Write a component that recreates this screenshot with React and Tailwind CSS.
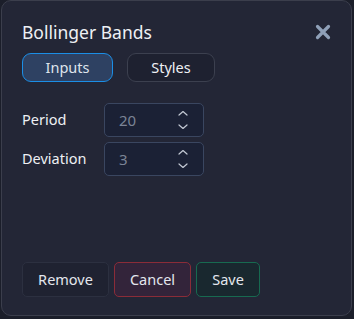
import React from "react";

function Spinner() {
  return (
    <svg width="12" height="22" viewBox="0 0 12 22" fill="none" stroke="#c3c9d4" strokeWidth="1.2" strokeLinecap="round" strokeLinejoin="round">
      <path d="M2 6 L6 2.5 L10 6" />
      <path d="M2 16 L6 19.5 L10 16" />
    </svg>
  );
}

function NumField({ value }) {
  return (
    <div className="w-[100px] h-[34px] rounded-[5px] border border-[#3a4660] bg-[#1b2135] flex items-center justify-between pl-[14px] pr-[14px]">
      <span className="text-[15px] text-[#7b8496]">{value}</span>
      <Spinner />
    </div>
  );
}

export default function App() {
  return (
    <div className="w-[354px] h-[319px] bg-[#1b1e2a] relative" style={{ fontFamily: '"Noto Sans", "Open Sans", sans-serif' }}>
      <div className="absolute left-[1px] top-0 w-[351px] h-[316px] rounded-[10px] border border-[#3b3e4c] bg-[#232636] flex flex-col pl-[20px] pr-[21px] pt-[18px] pb-[18px]">
        <div className="flex items-center justify-between h-[26px]">
          <span className="text-[17.5px] text-[#eef0f4]">Bollinger Bands</span>
          <svg width="16" height="16" viewBox="0 0 16 16" className="mr-[-1px]">
            <path d="M2.5 2.5 L13.5 13.5 M13.5 2.5 L2.5 13.5" stroke="#8fa0b8" strokeWidth="3.2" strokeLinecap="round" />
          </svg>
        </div>
        <div className="flex gap-[14px] mt-[8px]">
          <div className="w-[91px] h-[29px] rounded-[9px] border border-[#1b8ee6] bg-[#2e4162] flex items-center justify-center text-[14.5px] text-[#dfe4ec]">Inputs</div>
          <div className="w-[88px] h-[29px] rounded-[9px] border border-[#3c404f] bg-[#1e2130] flex items-center justify-center text-[14.5px] text-[#eef0f4]">Styles</div>
        </div>
        <div className="mt-[21px] flex flex-col gap-[5px]">
          <div className="flex items-center">
            <span className="w-[82px] text-[14.5px] text-[#eef0f4]">Period</span>
            <NumField value="20" />
          </div>
          <div className="flex items-center">
            <span className="w-[82px] text-[14.5px] text-[#eef0f4]">Deviation</span>
            <NumField value="3" />
          </div>
        </div>
        <div className="mt-auto flex gap-[5px]">
          <div className="w-[87px] h-[35px] rounded-[5px] border border-[#2c3040] bg-[#1f2231] flex items-center justify-center text-[14.5px] text-[#e4e7ee]">Remove</div>
          <div className="w-[77px] h-[35px] rounded-[5px] border border-[#8b2c38] bg-[#33243a] flex items-center justify-center text-[14.5px] text-[#e4e7ee]">Cancel</div>
          <div className="w-[64px] h-[35px] rounded-[5px] border border-[#176a50] bg-[#19282f] flex items-center justify-center text-[14.5px] text-[#e4e7ee]">Save</div>
        </div>
      </div>
    </div>
  );
}
